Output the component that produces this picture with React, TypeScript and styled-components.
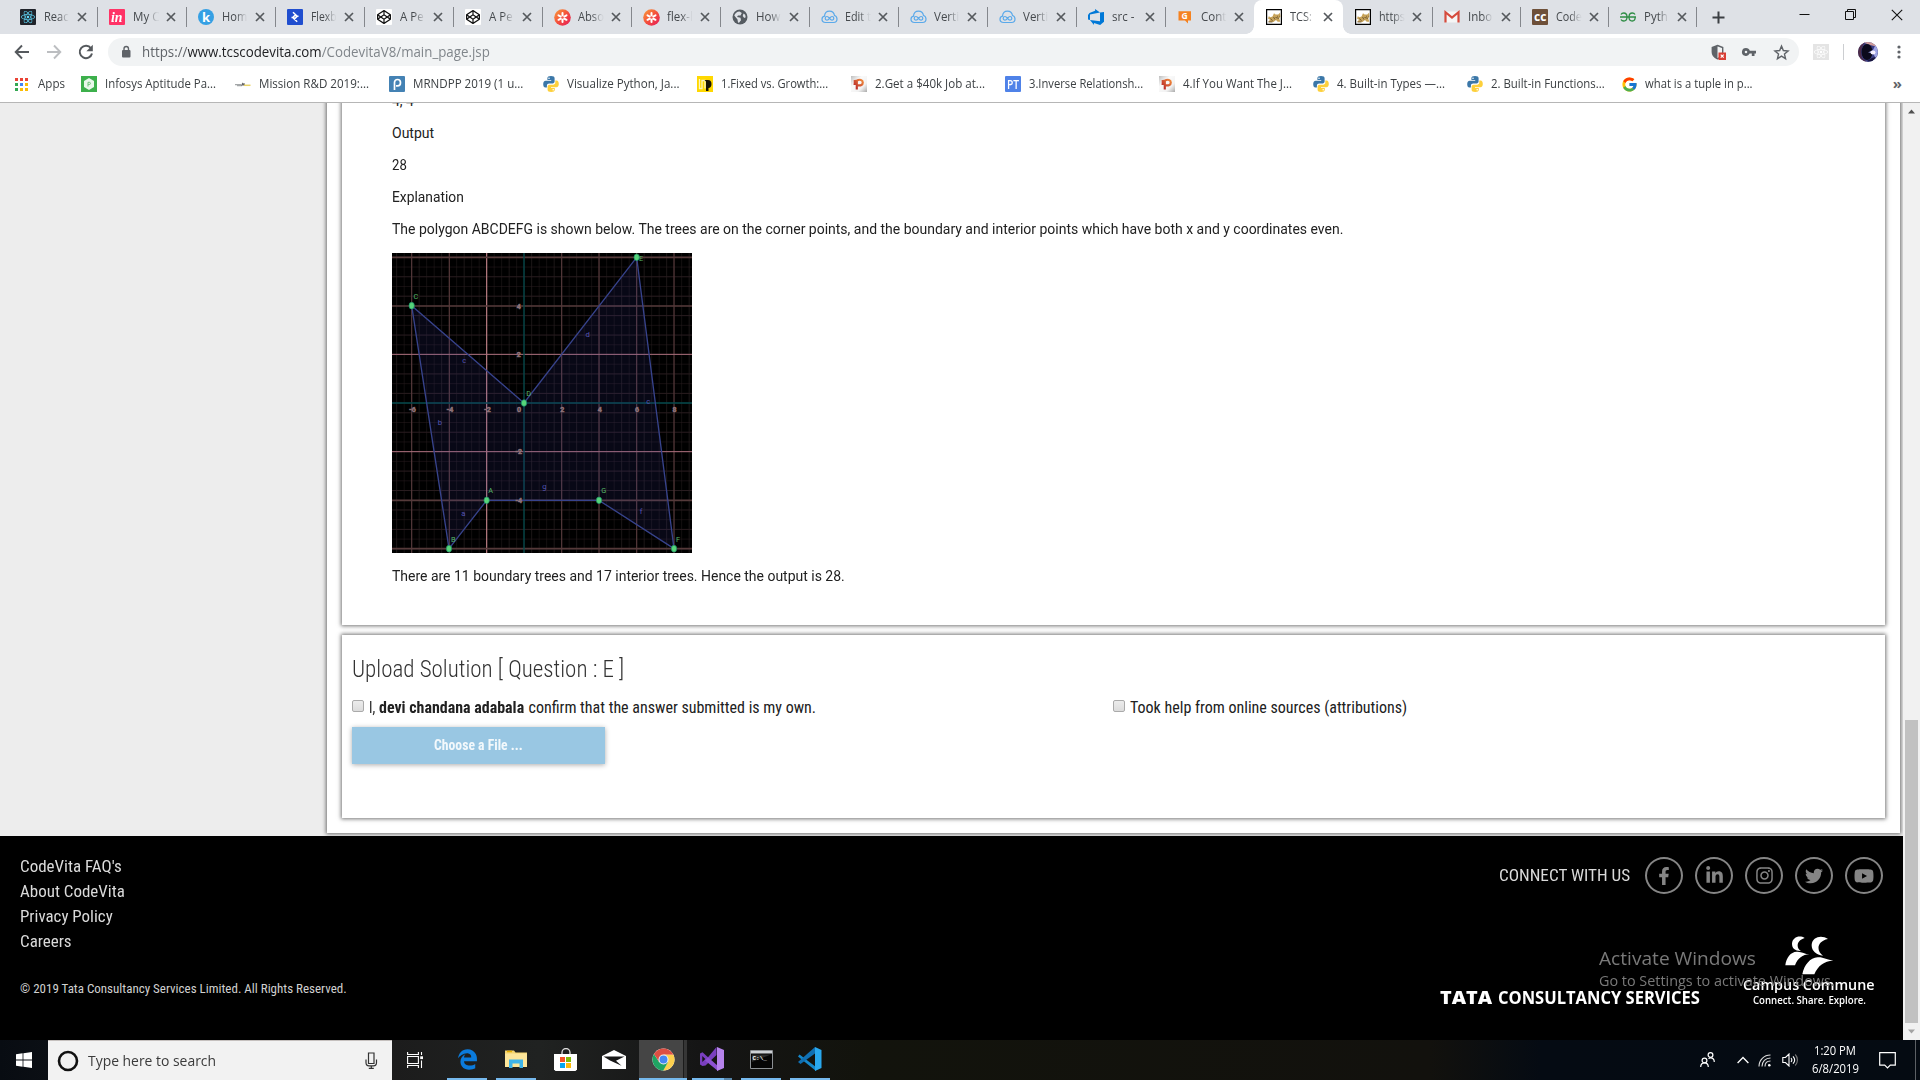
import React, { useLayoutEffect, useRef, useState } from "react";
import styled, { createGlobalStyle, css } from "styled-components";
import { FaReact, FaFacebookF, FaLinkedinIn, FaInstagram, FaTwitter, FaYoutube, FaCodepen } from "react-icons/fa";
import { FaEdgeLegacy } from "react-icons/fa6";
import { FcGoogle } from "react-icons/fc";

const UI = `"Open Sans", "Noto Sans", sans-serif`;
const BODY = `Roboto, "Liberation Sans", sans-serif`;
const COND = `"Roboto Condensed", Roboto, "Liberation Sans", sans-serif`;

const Global = createGlobalStyle`
  * { box-sizing: border-box; }
  body { margin: 0; background: #000; overflow: hidden; }
  svg { display: block; flex: none; }
  p, h2 { margin: 0; font-weight: inherit; }
`;

/* ---------- text set to a given measure ---------- */
const FitBox = styled.span<{ $w: number }>`
  display: inline-block;
  flex: none;
  width: ${(p) => p.$w}px;
  white-space: nowrap;
`;
const FitInner = styled.span`
  display: inline-block;
  transform-origin: 0 50%;
  white-space: pre;
`;
function Fit({ w, children }: { w: number; children: React.ReactNode }) {
  const ref = useRef<HTMLSpanElement>(null);
  const [scale, setScale] = useState(1);
  useLayoutEffect(() => {
    if (ref.current) setScale(w / ref.current.offsetWidth);
  }, [w]);
  return (
    <FitBox $w={w}>
      <FitInner ref={ref} style={{ transform: `scaleX(${scale})` }}>{children}</FitInner>
    </FitBox>
  );
}

/* ---------- favicons ---------- */
const Tile = styled.span<{ $bg: string; $fg?: string; $round?: boolean; $font?: string }>`
  width: 16px;
  height: 16px;
  flex: none;
  display: flex;
  align-items: center;
  justify-content: center;
  background: ${(p) => p.$bg};
  color: ${(p) => p.$fg || "#fff"};
  border-radius: ${(p) => (p.$round ? "50%" : "1px")};
  font: ${(p) => p.$font || `bold 12px/16px ${UI}`};
`;

function PythonMark() {
  return (
    <svg width="16" height="16" viewBox="0 0 16 16">
      <path d="M8 0C5.5 0 4.4.8 4.4 2.2V4H8.200v.7H2.700C1 4.700.2 6.200.2 8.200s.8 3.300 2.200 3.300h1.500V9.700c0-1.400 1-2.300 2.300-2.300h3.500c1 0 1.900-.8 1.900-1.900V2.200C11.600.8 10.500 0 8 0z" fill="#3b77a8" />
      <path d="M8.200 16c2.400 0 3.600-.8 3.600-2.200V12H8v-.7h5.500c1.500 0 2.300-1.500 2.300-3.300 0-2-.8-3.400-2.200-3.400h-1.300v1.900c0 1.300-1 2.200-2.200 2.200H6.600c-1.100 0-2 .8-2 1.900v3.200c0 1.400 1.200 2.200 3.600 2.200z" fill="#fdd03b" />
      <circle cx="6" cy="2.200" r=".8" fill="#fff" /><circle cx="10.200" cy="13.800" r=".8" fill="#fff" />
    </svg>
  );
}

function Favicon({ kind }: { kind: string }) {
  switch (kind) {
    case "react":
      return <Tile $bg="#20232a" $fg="#61dafb"><FaReact size={14} /></Tile>;
    case "invision":
      return <Tile $bg="#ff3366" $font={`italic bold 15px/14px "Liberation Serif", serif`}><Fit w={12}>in</Fit></Tile>;
    case "k":
      return <Tile $bg="#35a0e4" $round $font={`bold 13px/15px ${UI}`}>k</Tile>;
    case "flexbox":
      return (
        <Tile $bg="#204ecf">
          <svg width="16" height="16" viewBox="0 0 16 16" fill="none" stroke="#fff" strokeWidth="1.500"><path d="M6 3.200L10.200 7.300 6.800 10.600M10.200 12.700L5.800 8.500 8.800 5.500M4.500 8.600h3M8.500 7.300h3" /></svg>
        </Tile>
      );
    case "codepen":
      return <Tile $bg="#fff" $fg="#111"><FaCodepen size={14} /></Tile>;
    case "asterisk":
      return (
        <svg width="17" height="17" viewBox="0 0 17 17">
          <defs><linearGradient id="ast" x1="0" y1="0" x2="1" y2="1"><stop offset="0" stopColor="#f9a03a" /><stop offset=".5" stopColor="#f4503c" /><stop offset="1" stopColor="#e5195c" /></linearGradient></defs>
          <circle cx="8.500" cy="8.500" r="8.300" fill="url(#ast)" />
          <g stroke="#fff" strokeWidth="2" strokeLinecap="round"><path d="M8.500 4v9M4.500 6.300l8 4.500M12.500 6.300l-8 4.500" /></g>
          <circle cx="8.500" cy="8.500" r="1.300" fill="#f1574a" />
        </svg>
      );
    case "globe":
      return (
        <svg width="16" height="16" viewBox="0 0 16 16"><circle cx="8" cy="8" r="7.500" fill="#555b61" /><path d="M2.300 6.500C3 4.200 5 2.600 7.500 2.500L9.800 4 8.500 6.500H6L5 8l3.500.8.500 2.500-2 2.500-1-.3L5.500 10.500zM11.500 4.500l1.700 1.200.5 2.500-1.500.8-1.500-2z" fill="#dee1e6" /></svg>
      );
    case "cloud":
      return (
        <svg width="17" height="16" viewBox="0 0 17 16" fill="none" stroke="#5aa9ea" strokeWidth="1.200"><path d="M4.500 13.500C2.500 13.500 1 12.200 1 10.300c0-1.600 1-2.800 2.500-3.100C3.700 4.200 5.800 2.200 8.500 2.200s4.600 1.800 5 4.300c1.500.5 2.500 1.800 2.500 3.500 0 2-1.500 3.500-3.500 3.500z" /><path d="M8.500 9.300C7.500 8 6.800 7.500 6 7.500a1.800 1.800 0 000 3.600c.8 0 1.500-.5 2.500-1.800s1.700-1.800 2.500-1.800a1.800 1.800 0 010 3.600c-.8 0-1.500-.5-2.500-1.800z" /></svg>
      );
    case "devops":
      return <svg width="16" height="16" viewBox="0 0 24 24"><path fill="#0078d7" d="M0 8.877L2.247 5.910l8.405-3.416V.022l7.370 5.393L2.966 8.338v8.225L0 15.707zm24-4.450v14.651l-5.753 4.900-9.303-3.057v3.056l-5.978-7.416 15.057 1.798V5.415z" /></svg>;
    case "cont":
      return <svg width="16" height="16" viewBox="0 0 16 16"><path d="M1.500 2.200h12.500v9.300h-3v3l-3-3H1.500z" fill="#f58220" /><text x="7.700" y="9.900" textAnchor="middle" fontSize="8.500" fontWeight="700" fill="#fff" fontFamily="Open Sans, sans-serif">G</text></svg>;
    case "tomcat":
      return (
        <svg width="16" height="16" viewBox="0 0 16 16"><path d="M.6.6h14.800v14.800H.6z" fill="#fff" stroke="#000" strokeWidth="1.200" /><path d="M6.500 7.500L8 4.300l1.600 1.300h2.600L14 3.800l.5 3.700-1.200 2 1 3.300h-2.600L10 11l-2.500 2H2.200L4 10.800 2 9.500l.8-2.300 1.700 1z" fill="#c7a35a" /><path d="M4.500 9.500l2 2.300M7.500 8l1.500 2.500M2.500 13h4M11 7.300h.8M13 7.300h.6M9.500 8.500l3.500.8" stroke="#5f4a2a" strokeWidth=".8" /></svg>
      );
    case "gmail":
      return <svg width="16" height="16" viewBox="0 0 16 16"><path d="M1 2.500h14v11H1z" fill="#f5f5f5" /><path d="M1.500 13.500V3.200L8 8.500l6.500-5.300v10.300" fill="none" stroke="#d54b3d" strokeWidth="2.200" /></svg>;
    case "cc":
      return <Tile $bg="#6e5039" $font={`bold 12px/14px ${UI}`}><Fit w={12}>cc</Fit></Tile>;
    case "gfg":
      return <svg width="16" height="16" viewBox="0 0 16 16" fill="none" stroke="#2f8d46" strokeWidth="1.300"><path d="M0 8h16M7 8c0 2.700-1.400 4-3.200 4C2.500 12 1.500 11.400 1 10.500M1 5.500C1.500 4.600 2.500 4 3.700 4 5.500 4 7 5.300 7 8M9 8c0 2.700 1.400 4 3.200 4 1.600 0 3-.9 3-4M15 5.500C14.500 4.600 13.500 4 12.300 4 10.500 4 9 5.300 9 8" /></svg>;
    case "apps":
      return (
        <svg width="13" height="13" viewBox="0 0 13 13">
          {["#ea4335", "#ea4335", "#ea4335", "#34a853", "#4285f4", "#fbbc04", "#34a853", "#fbbc04", "#fbbc04"].map((c, i) => (
            <rect key={i} x={(i % 3) * 5} y={Math.floor(i / 3) * 5} width="3" height="3" fill={c} />
          ))}
        </svg>
      );
    case "infosys":
      return <svg width="16" height="16" viewBox="0 0 16 16"><path d="M0 0h16v16H0z" fill="#3db04c" /><path d="M8 2l5 2.900v6.200L8 14l-5-2.900V4.900z" fill="#e8f8ea" /><path d="M7 10.500V6.300h1.300a1.100 1.100 0 010 2.200H7.200" fill="none" stroke="#6cc277" strokeWidth="1" /></svg>;
    case "mission":
      return <svg width="16" height="16" viewBox="0 0 16 16"><path d="M0 8.700h6M2 9.700h5" stroke="#a4a7a9" strokeWidth="1.300" /><path d="M6 9.500l1.500-3 1 1 1-.5.5 2.500z" fill="#666" /><path d="M9 9.300h6.500" stroke="#e9d367" strokeWidth="1.500" /></svg>;
    case "p-blue":
      return <Tile $bg="#4482b4"><svg width="16" height="16" viewBox="0 0 16 16"><path d="M5.500 14V6.500c0-2 1.200-3 3-3s3 1.300 3 3.200-1.200 3.200-3 3.200H7" fill="none" stroke="#fff" strokeWidth="1.700" /></svg></Tile>;
    case "python":
      return <PythonMark />;
    case "lp":
      return <svg width="16" height="16" viewBox="0 0 16 16"><path d="M0 0h16v16H0z" fill="#ffd800" /><path d="M2.500 3v9.500h2.500V4.500h3v8" fill="none" stroke="#fff6c0" strokeWidth="1.300" /><path d="M7.500 4h3.500c2.300 0 3.500 1.400 3.500 4s-1.300 4-3 4v3H9V5.500z" fill="#1a1505" /></svg>;
    case "p-red":
      return (
        <svg width="16" height="16" viewBox="0 0 16 16"><defs><linearGradient id="pr" x1="0" y1="0" x2="1" y2="1"><stop offset="0" stopColor="#bdbdbd" /><stop offset=".35" stopColor="#fafafa" /><stop offset=".7" stopColor="#f2f2f2" /><stop offset="1" stopColor="#aaa" /></linearGradient><linearGradient id="pg" x1="1" y1="0" x2="0" y2="1"><stop offset="0" stopColor="#f08a3c" /><stop offset="1" stopColor="#b3202a" /></linearGradient></defs><path d="M0 0h16v16H0z" fill="url(#pr)" /><path d="M5.800 13.500V4.700c3-1.900 6-.7 6 1.700 0 2.200-2.200 3.600-5.200 2.800M3.600 4c.5 1.500.2 3 0 5" fill="none" stroke="url(#pg)" strokeWidth="2.200" /></svg>
      );
    case "pt":
      return <Tile $bg="#4f82e8" $font={`600 12px/15px ${UI}`}><Fit w={12}>PT</Fit></Tile>;
    default:
      return <FcGoogle size={17} />;
  }
}

/* ---------- tab strip ---------- */
const Desktop = styled.div`
  width: 1920px;
  height: 1080px;
  display: flex;
  flex-direction: column;
  overflow: hidden;
  position: relative;
`;
const TabStrip = styled.div`
  height: 34px;
  flex: none;
  display: flex;
  padding-left: 8px;
  background: #dee1e6;
`;
const TabItem = styled.div<{ $active?: boolean; $w: number; $line?: boolean }>`
  width: ${(p) => p.$w}px;
  height: 34px;
  flex: none;
  display: flex;
  align-items: center;
  padding: 0 9px 0 12px;
  position: relative;
  font: 12px/18px ${UI};
  color: #45494d;
  ${(p) => p.$line && css`
    &::after { content: ""; position: absolute; right: -1px; top: 7px; width: 1px; height: 20px; background: #84878c; }
  `}
  ${(p) => p.$active && css`
    background: #fff;
    border-radius: 8px 8px 0 0;
    &::before, &::after { content: ""; position: absolute; bottom: 0; width: 8px; height: 8px; }
    &::before { left: -8px; background: radial-gradient(circle at 0 0, transparent 7.500px, #fff 8px); }
    &::after { right: -8px; background: radial-gradient(circle at 100% 0, transparent 7.500px, #fff 8px); }
  `}
`;
const TabIcon = styled.span`
  width: 16px;
  flex: none;
  display: flex;
  justify-content: center;
`;
const TabLabel = styled.span<{ $solid?: boolean }>`
  width: 26px;
  margin-left: 8px;
  flex: none;
  height: 18px;
  ${(p) => !p.$solid && css`mask-image: linear-gradient(to right, #000 54%, rgba(0, 0, 0, 0.08) 92%);`}
`;
const TabClose = styled.span`
  margin-left: 7px;
  display: flex;
`;
const WindowButtons = styled.div`
  margin-left: auto;
  display: flex;
  align-items: center;
  height: 29px;
  gap: 35px;
  padding-right: 17px;
`;
const NewTab = styled.span`
  display: flex;
  align-items: center;
  padding-left: 16px;
`;

const tabs: { icon: string; label: string; w?: number; active?: boolean; tw?: number; solid?: boolean }[] = [
  { icon: "react", label: "Reac", tw: 25 },
  { icon: "invision", label: "My C", tw: 26 },
  { icon: "k", label: "Hom", tw: 25 },
  { icon: "flexbox", label: "Flexb", tw: 26 },
  { icon: "codepen", label: "A Pe", tw: 24 },
  { icon: "codepen", label: "A Pe", tw: 24 },
  { icon: "asterisk", label: "Abso", tw: 26 },
  { icon: "asterisk", label: "flex-l", tw: 26 },
  { icon: "globe", label: "How", tw: 24 },
  { icon: "cloud", label: "Edit t", tw: 26 },
  { icon: "cloud", label: "Verti", tw: 25 },
  { icon: "cloud", label: "Verti", tw: 25 },
  { icon: "devops", label: "src -", tw: 22, solid: true },
  { icon: "cont", label: "Cont", tw: 25 },
  { icon: "tomcat", label: "TCS:", tw: 22, active: true },
  { icon: "tomcat", label: "https", tw: 26 },
  { icon: "gmail", label: "Inbo", tw: 24, w: 88 },
  { icon: "cc", label: "Code", tw: 26, w: 88 },
  { icon: "gfg", label: "Pyth", tw: 24, w: 88 },
];

/* ---------- toolbar ---------- */
const Toolbar = styled.div`
  height: 36px;
  flex: none;
  display: flex;
  align-items: center;
  background: #fff;
  padding: 0 14px;
`;
const NavButtons = styled.div`
  display: flex;
  gap: 16px;
  width: 94px;
  flex: none;
`;
const Omnibox = styled.div`
  width: 1691px;
  height: 28px;
  flex: none;
  border-radius: 14px;
  background: #f1f3f4;
  display: flex;
  align-items: center;
  padding: 0 9px 0 12px;
  font: 14px/20px ${UI};
  color: #80868b;
  b { font-weight: 400; color: #202124; }
  i { font-style: normal; color: #5f6368; }
`;
const UrlText = styled.div`
  flex: 1;
  margin-left: 10px;
  height: 21px;
`;
const OmniIcons = styled.div`
  display: flex;
  gap: 14px;
  align-items: center;
  svg:last-child { margin-left: 2px; }
`;
const ToolbarRight = styled.div`
  display: flex;
  align-items: center;
  flex: 1;
  justify-content: space-between;
  padding-left: 14px;
`;
const ExtTile = styled.span`
  width: 16px;
  height: 16px;
  background: #e4e4e4;
  color: #fff;
  display: flex;
  align-items: center;
  justify-content: center;
`;
const ToolDivider = styled.span`
  width: 1px;
  height: 16px;
  background: #ccced1;
`;

/* ---------- bookmarks ---------- */
const BookmarkBar = styled.div`
  height: 33px;
  flex: none;
  display: flex;
  align-items: center;
  background: #fff;
  border-bottom: 1px solid #b6b6b6;
  padding: 0 18px 4px 15px;
  font: 12px/18px ${UI};
  color: #3c4043;
`;
const Bookmark = styled.div<{ $w: number; $gap?: number }>`
  width: ${(p) => p.$w}px;
  flex: none;
  display: flex;
  align-items: center;
  gap: ${(p) => p.$gap ?? 8}px;
`;
const More = styled.span`
  margin-left: auto;
  padding-bottom: 2px;
  font: bold 15px/16px ${UI};
  color: #5f6368;
`;
const bookmarks: [string, string, number][] = [
  ["infosys", "Infosys Aptitude Pa...", 111],
  ["mission", "Mission R&D 2019:...", 110],
  ["p-blue", "MRNDPP 2019 (1 u...", 110],
  ["python", "Visualize Python, Ja...", 112],
  ["lp", "1.Fixed vs. Growth:...", 107],
  ["p-red", "2.Get a $40k Job at...", 110],
  ["pt", "3.Inverse Relationsh...", 114],
  ["p-red", "4.If You Want The J...", 109],
  ["python", "4. Built-in Types —...", 108],
  ["python", "2. Built-in Functions...", 114],
  ["google", "what is a tuple in p...", 108],
];

/* ---------- page ---------- */
const Viewport = styled.div`
  height: 937px;
  flex: none;
  display: flex;
  background: #ededed;
`;
const PageArea = styled.div`
  width: 1903px;
  height: 937px;
  overflow: hidden;
  display: flex;
  flex-direction: column;
`;
const Upper = styled.div`
  height: 733px;
  flex: none;
  overflow: hidden;
  display: flex;
  padding: 0 3px 3px 327px;
`;
const raised = css`
  background: #fff;
  box-shadow: 0 0 4px 1px rgba(0, 0, 0, 0.55);
`;
const Panel = styled.main`
  ${raised}
  flex: 1;
  height: 750px;
  margin-top: -20px;
  padding: 0 15px 15px 15px;
  display: flex;
  flex-direction: column;
  justify-content: flex-end;
  gap: 10px;
`;
const Card = styled.section<{ $h: number }>`
  ${raised}
  height: ${(p) => p.$h}px;
  flex: none;
`;
const Problem = styled.div`
  padding: 8px 0 0 50px;
  font: 14px/20px ${BODY};
  color: #212121;
  display: flex;
  flex-direction: column;
  gap: 12px;
`;
const Figure = styled.div`
  margin: 2px 0 1px;
  height: 300px;
`;
const UploadBody = styled.div`
  padding: 18px 10px;
  display: flex;
  flex-direction: column;
  font: 16px/22px ${COND};
  color: #212121;
`;
const Title = styled.h2`
  font: 300 24px/32px ${COND};
  color: #333;
  height: 32px;
`;
const ConfirmRow = styled.div`
  display: flex;
  margin-top: 12px;
  height: 22px;
`;
const Confirm = styled.label<{ $w: number }>`
  width: ${(p) => p.$w}px;
  flex: none;
  display: flex;
  b { font-weight: 700; }
`;
const Check = styled.span`
  width: 12px;
  height: 12px;
  margin: 3px 5px 0 0;
  flex: none;
  border: 1px solid #aaa;
  border-radius: 2px;
  background: linear-gradient(#ececec, #dcdcdc);
`;
const Words = styled.span`
  display: flex;
  gap: 4px;
`;
const FileButton = styled.button`
  width: 253px;
  height: 37px;
  margin: 8px 0 0;
  border: 0;
  padding: 0 0 2px;
  background: #99c7e3;
  color: #f3f9fc;
  font: 700 14px/20px ${COND};
  box-shadow: 0 1px 5px rgba(0, 0, 0, 0.33);
`;

const Scrollbar = styled.div`
  width: 17px;
  height: 937px;
  background: #f1f1f1;
  display: flex;
  flex-direction: column;
  align-items: center;
  padding: 6px 0;
`;
const Thumb = styled.div`
  width: 13px;
  height: 303px;
  margin-top: auto;
  margin-bottom: 6px;
  background: #c1c1c1;
`;

/* ---------- footer ---------- */
const Footer = styled.footer`
  height: 204px;
  flex: none;
  background: #000;
  display: flex;
  justify-content: space-between;
  padding: 17px 19px 0 20px;
  font: 16px/25px ${COND};
  color: #dadada;
`;
const FooterLinks = styled.nav`
  display: flex;
  flex-direction: column;
  padding-top: 1px;
  small { font: 13px/20px ${COND}; color: #d0d0d0; margin-top: 25px; }
`;
const FooterRight = styled.div`
  display: flex;
  flex-direction: column;
  align-items: flex-end;
  padding-top: 4px;
`;
const Social = styled.div`
  display: flex;
  align-items: center;
  gap: 12px;
  margin-right: 1px;
`;
const SocialLabel = styled.span`
  margin-right: 3px;
`;
const Ring = styled.span`
  width: 38px;
  height: 37px;
  border: 2px solid #858585;
  border-radius: 50%;
  color: #858585;
  display: flex;
  align-items: center;
  justify-content: center;
`;
const Brands = styled.div`
  display: flex;
  align-items: flex-end;
  margin-top: 41px;
  padding-right: 9px;
  color: #fff;
`;
const TcsBrand = styled.div`
  display: flex;
  gap: 6px;
  font: 700 17.500px/18px ${UI};
  margin-right: 43px;
  b { font-weight: 800; }
`;
const Commune = styled.div`
  display: flex;
  flex-direction: column;
  align-items: center;
  font: 600 15px/18px ${UI};
  small { font: 600 11px/13px ${UI}; }
`;
const Watermark = styled.div`
  position: absolute;
  left: 1599px;
  top: 945px;
  display: flex;
  flex-direction: column;
  color: rgba(128, 128, 128, 0.95);
  font: 14.500px/20px ${UI};
  strong { font: 19px/26px ${UI}; }
`;

/* ---------- taskbar ---------- */
const Taskbar = styled.div`
  height: 40px;
  flex: none;
  display: flex;
  background: linear-gradient(to right, #080c12 0, #0b0f14 48px, #1c1c1c 392px, #202221 540px, #151515 700px, #12130c 870px, #12110d 1430px, #050b13 1540px, #050b12 100%);
`;
const StartButton = styled.div`
  width: 48px;
  display: flex;
  align-items: center;
  justify-content: center;
`;
const SearchBox = styled.div`
  width: 344px;
  flex: none;
  background: #f2f2f2;
  border-top: 1px solid #c5c0be;
  display: flex;
  align-items: center;
  padding: 0 14px 0 9px;
  font: 15px/20px ${UI};
  color: #3b3b3b;
`;
const SearchText = styled.span`
  flex: 1;
  margin-left: 9px;
  padding-bottom: 2px;
`;
const TaskView = styled.div`
  width: 50.500px;
  display: flex;
  align-items: center;
  justify-content: center;
  padding-right: 3px;
`;
const AppButton = styled.div<{ $line?: boolean; $active?: boolean; $more?: boolean }>`
  width: ${(p) => (p.$active ? 48 : 40)}px;
  margin: ${(p) => (p.$active ? "0 0.500px" : "0 4.500px")};
  flex: none;
  display: flex;
  align-items: center;
  justify-content: center;
  border-bottom: 2px solid ${(p) => (p.$line ? "#76b9ed" : "transparent")};
  ${(p) => p.$active && css`
    background: linear-gradient(to right, #454545 44px, #1b1b1b 44px, #1b1b1b 45px, #363636 45px);
  `}
  ${(p) => p.$more && css`
    border-image: linear-gradient(to right, #76b9ed 78%, #5686ab 78%) 2;
    border-width: 0 0 2px;
  `}
`;
const Tray = styled.div`
  margin-left: auto;
  display: flex;
  align-items: center;
  color: #fff;
  font: 12px/18px ${UI};
`;
const TrayIcon = styled.span<{ $w: number }>`
  width: ${(p) => p.$w}px;
  display: flex;
  justify-content: center;
`;
const Clock = styled.div`
  width: 58px;
  display: flex;
  flex-direction: column;
  align-items: center;
`;
const ShowDesktop = styled.span`
  width: 5px;
  height: 40px;
  border-left: 1px solid #5c6064;
`;

/* ---------- figure ---------- */
const range = (n: number) => Array.from({ length: n }, (_, i) => i);
function Graph() {
  const vx = [95, 208, 320, 545, 657, 770, 882];
  const hy = [37, 183, 328, 620, 766, 911];
  const pts: [string, number, number, number, number][] = [
    ["A", 320, 766, 332, 745], ["B", 207, 911, 220, 891], ["C", 95, 182, 108, 162], ["D", 432, 474, 446, 454],
    ["E", 770, 37, 783, 47], ["F", 882, 911, 894, 890], ["G", 657, 766, 671, 745],
  ];
  const edges: [string, number, number][] = [["a", 250, 813], ["b", 180, 539], ["c", 253, 353], ["d", 623, 276], ["c", 805, 478], ["f", 783, 806], ["g", 493, 732]];
  return (
    <svg width="300" height="300" viewBox="36 24 900 900" fontFamily="Roboto, sans-serif">
      <path d="M36 24h900v900H36z" fill="#000" />
      {range(40).map((i) => <path key={`v${i}`} d={`M${50 + i * 22.5} 24v900`} stroke="#1c1717" strokeWidth="3" opacity={i % 3 ? 0.7 : 1} />)}
      {range(31).map((i) => <path key={`h${i}`} d={`M36 ${37 + i * 29.15}h900`} stroke="#2a1d20" strokeWidth="3" opacity={i % 2 ? 0.5 : 1} />)}
      {vx.map((x) => <path key={x} d={`M${x} 24v900`} stroke={x === 320 ? "#bd8085" : "#56393b"} strokeWidth="3.500" />)}
      {hy.map((y) => <path key={y} d={`M36 ${y}h900`} stroke={y === 328 || y === 620 ? "#ab6f7c" : "#553a3a"} strokeWidth={y === 328 || y === 620 ? 3 : 5} />)}
      <path d="M432 24v900M36 474h900" stroke="#034a4c" strokeWidth="4" />
      <path d="M320 766L207 911 95 182l337 292L770 37l112 874-225-145z" fill="#4040b8" fillOpacity=".12" stroke="#37438c" strokeWidth="4" />
      <g fontSize="21" fontWeight="700" fill="#c08c94" stroke="#7d6a70" strokeWidth="1.500" textAnchor="middle">
        {[-6, -4, -2, 0, 2, 4, 6, 8].map((n, i) => (
          <text key={n} x={n === 0 ? 417 : 97 + i * 112.400} y="502">{n}</text>
        ))}
        {[[4, 191], [2, 337], [-2, 627], [-4, 773]].map(([n, y]) => (
          <text key={n} x="416" y={y}>{n}</text>
        ))}
      </g>
      {edges.map(([t, x, y], i) => <text key={i} x={x} y={y} textAnchor="middle" fontSize="23" fill="#5454b4">{t}</text>)}
      {pts.map(([t, x, y, tx, ty]) => (
        <g key={t}>
          <ellipse cx={x} cy={y} rx="8" ry="10" fill="#57d57a" stroke="#178c66" strokeWidth="2" />
          <text x={tx} y={ty} textAnchor="middle" fontSize="22" fill="#55b768">{t}</text>
        </g>
      ))}
    </svg>
  );
}

function ChromeLogo() {
  return (
    <svg width="23" height="23" viewBox="0 0 48 48">
      <circle cx="24" cy="24" r="23" fill="#fff" />
      <path d="M24 24L4.100 12.500A23 23 0 0143.900 12.500L45 14H24z" fill="#dd4f43" />
      <path d="M24 14h20.700A23 23 0 0123 47l10-18z" fill="#fdd04e" />
      <path d="M4.100 12.500A23 23 0 0023.500 47L33.500 29 24 24 15 29z" fill="#1fa463" />
      <path d="M4.100 12.500L15 29l9-15z" fill="#dd4f43" />
      <circle cx="24" cy="24" r="10.500" fill="#f1f1f1" /><circle cx="24" cy="24" r="8.300" fill="#4587f3" />
    </svg>
  );
}

function Avatar() {
  return (
    <svg width="20" height="20" viewBox="0 0 20 20">
      <defs><clipPath id="av"><circle cx="10" cy="10" r="10" /></clipPath></defs>
      <g clipPath="url(#av)">
        <path d="M0 0h20v20H0z" fill="#3b3f86" />
        <path d="M4 0h16v5L12 3z" fill="#cf9a98" />
        <path d="M0 0h7L4 5 3 10l1 6 5 4H0z" fill="#4e2c48" />
        <ellipse cx="9" cy="10" rx="5.500" ry="8" fill="#0b0a1c" />
        <path d="M18 2l-3 6-5 2.500 5 .5 3 6 2-7z" fill="#9ea4e6" />
        <ellipse cx="15" cy="10.500" rx="2.500" ry="2" fill="#f5f0ff" />
        <path d="M9 19l5-3 4-1-4 5z" fill="#18153c" />
      </g>
    </svg>
  );
}

export default function App() {
  return (
    <Desktop>
      <Global />
      <TabStrip>
        {tabs.map((t, i) => (
          <TabItem key={i} $w={t.w ?? 89} $active={t.active} $line={!t.active && i !== 13}>
            <TabIcon><Favicon kind={t.icon} /></TabIcon>
            <TabLabel $solid={t.solid}><Fit w={t.tw ?? 25}>{t.label}</Fit></TabLabel>
            <TabClose><svg width="10" height="10" viewBox="0 0 10 10"><path d="M1 1l8 8M9 1L1 9" stroke="#55595d" strokeWidth="1.700" /></svg></TabClose>
          </TabItem>
        ))}
        <NewTab><svg width="13" height="13" viewBox="0 0 13 13"><path d="M6.500 .5v12M.5 6.500h12" stroke="#3b3f43" strokeWidth="2" /></svg></NewTab>
        <WindowButtons>
          <svg width="11" height="11" viewBox="0 0 11 11"><path d="M.5 5.500h10" stroke="#111" /></svg>
          <svg width="11" height="11" viewBox="0 0 11 11" fill="none" stroke="#111"><path d="M.5 2.500h8v8h-8zM2.500 2.500v-2h8v8h-2" /></svg>
          <svg width="12" height="12" viewBox="0 0 12 12"><path d="M.8.8l10.400 10.400M11.200.8L.8 11.200" stroke="#111" strokeWidth="1.100" /></svg>
        </WindowButtons>
      </TabStrip>

      <Toolbar>
        <NavButtons>
          <svg width="16" height="16" viewBox="0 0 16 16" fill="none" stroke="#55595d" strokeWidth="1.900"><path d="M15 8H2M8 1.500L1.700 8 8 14.500" /></svg>
          <svg width="16" height="16" viewBox="0 0 16 16" fill="none" stroke="#bcbec1" strokeWidth="1.900"><path d="M1 8h13M8 1.500L14.300 8 8 14.500" /></svg>
          <svg width="16" height="16" viewBox="0 0 16 16"><path d="M13 4.300A6.200 6.200 0 1014 9.500" fill="none" stroke="#55595d" strokeWidth="2" /><path d="M14.800.8v6.400H8.400z" fill="#55595d" /></svg>
        </NavButtons>
        <Omnibox>
          <svg width="12" height="14" viewBox="0 0 12 14"><rect x="2" y="5" width="8.500" height="7.500" rx="1" fill="#5f6368" /><path d="M4 5.500V3.800a2.200 2.200 0 014.500 0v1.700" fill="none" stroke="#5f6368" strokeWidth="1.400" /></svg>
          <UrlText><Fit w={348}><i>https://</i><b>www.tcscodevita.com</b>/CodevitaV8/main_page.jsp</Fit></UrlText>
          <OmniIcons>
            <svg width="17" height="17" viewBox="0 0 17 17"><path d="M7.500 1.500L2.300 3.500V8c0 3.500 2.300 5.600 5.200 6.800" fill="#5f6368" /><path d="M7.500 1.500l5.200 2V8c0 3.500-2.300 5.600-5.200 6.800-2.900-1.200-5.200-3.300-5.200-6.800V3.500z" fill="none" stroke="#5f6368" strokeWidth="1.400" /><path d="M8.500 8.500H16V16H8.500z" fill="#d93f35" /><path d="M10.700 10.700l3 3M13.700 10.700l-3 3" stroke="#fff" strokeWidth="1.200" /></svg>
            <svg width="16" height="12" viewBox="0 0 16 12"><path fillRule="evenodd" d="M5 2a4 4 0 013.800 2.800H15v2.800h-1.500V10h-2.700V7.600H8.600A4 4 0 115 2zm0 2.700a1.300 1.300 0 100 2.600 1.300 1.300 0 000-2.600z" fill="#5f6368" /></svg>
            <svg width="17" height="17" viewBox="0 0 24 24"><path d="M12 3l2.600 6.200 6.700.6-5.100 4.400 1.500 6.500L12 17.200l-5.700 3.500 1.500-6.500-5.100-4.400 6.700-.6z" fill="none" stroke="#5f6368" strokeWidth="2" /></svg>
          </OmniIcons>
        </Omnibox>
        <ToolbarRight>
          <ExtTile><FaReact size={14} /></ExtTile>
          <ToolDivider />
          <Avatar />
          <svg width="14" height="14" viewBox="0 0 14 14" fill="#5f6368"><circle cx="7" cy="2" r="1.600" /><circle cx="7" cy="7" r="1.600" /><circle cx="7" cy="12" r="1.600" /></svg>
        </ToolbarRight>
      </Toolbar>

      <BookmarkBar>
        <Bookmark $w={66} $gap={10}><Favicon kind="apps" /><Fit w={27}>Apps</Fit></Bookmark>
        {bookmarks.map(([icon, label, w]) => (
          <Bookmark key={label} $w={154} $gap={icon === "google" ? 7 : 8}><Favicon kind={icon} /><Fit w={w}>{label}</Fit></Bookmark>
        ))}
        <More>»</More>
      </BookmarkBar>

      <Viewport>
        <PageArea>
          <Upper>
            <Panel>
              <Card $h={542}>
                <Problem>
                  <p>4, 4</p>
                  <p><Fit w={42}>Output</Fit></p>
                  <p><Fit w={15}>28</Fit></p>
                  <p><Fit w={72}>Explanation</Fit></p>
                  <p><Fit w={951}>The polygon ABCDEFG is shown below. The trees are on the corner points, and the boundary and interior points which have both x and y coordinates even.</Fit></p>
                  <Figure><Graph /></Figure>
                  <p><Fit w={453}>There are 11 boundary trees and 17 interior trees. Hence the output is 28.</Fit></p>
                </Problem>
              </Card>
              <Card $h={183}>
                <UploadBody>
                  <Title><Fit w={272}>Upload Solution [ Question : E ]</Fit></Title>
                  <ConfirmRow>
                    <Confirm $w={761}><Check /><Words><Fit w={6}>I,</Fit><b><Fit w={145.500}>devi chandana adabala</Fit></b><Fit w={288}>confirm that the answer submitted is my own.</Fit></Words></Confirm>
                    <Confirm $w={300}><Check /><Fit w={277}>Took help from online sources (attributions)</Fit></Confirm>
                  </ConfirmRow>
                  <FileButton><Fit w={89}>Choose a File ...</Fit></FileButton>
                </UploadBody>
              </Card>
            </Panel>
          </Upper>
          <Footer>
            <FooterLinks>
              <Fit w={102}>CodeVita FAQ's</Fit>
              <Fit w={105}>About CodeVita</Fit>
              <Fit w={93}>Privacy Policy</Fit>
              <Fit w={52}>Careers</Fit>
              <small><Fit w={327}>© 2019 Tata Consultancy Services Limited. All Rights Reserved.</Fit></small>
            </FooterLinks>
            <FooterRight>
              <Social>
                <SocialLabel><Fit w={131}>CONNECT WITH US</Fit></SocialLabel>
                <Ring><FaFacebookF size={18} /></Ring>
                <Ring><FaLinkedinIn size={19} /></Ring>
                <Ring><FaInstagram size={19} /></Ring>
                <Ring><FaTwitter size={18} /></Ring>
                <Ring><FaYoutube size={20} /></Ring>
              </Social>
              <Brands>
                <TcsBrand><b><Fit w={52}>TATA</Fit></b><Fit w={202}>CONSULTANCY SERVICES</Fit></TcsBrand>
                <Commune>
                  <svg width="50" height="40" viewBox="1088 344 150 120" fill="#fff">
                    <path d="M1150 353C1134 343 1113 351 1112 370c0 13 8 21 27 22-14-8-16-30 11-39zM1092 435c3-24 16-40 34-41 16-1 24 7 38 8-20 1-35 12-43 33z" />
                    <path d="M1220 356c-20-14-47-6-49 17-1 18 13 30 34 33-20-13-20-43 15-50zM1143 462c6-29 23-49 46-51 18-1 28 8 47 10-28 1-46 15-57 41z" />
                  </svg>
                  <Fit w={132}>Campus Commune</Fit>
                  <small><Fit w={113}>Connect. Share. Explore.</Fit></small>
                </Commune>
              </Brands>
            </FooterRight>
          </Footer>
        </PageArea>
        <Scrollbar>
          <svg width="7" height="5" viewBox="0 0 7 5"><path d="M0 4.500L3.500 .5 7 4.500z" fill="#505050" /></svg>
          <Thumb />
          <svg width="7" height="5" viewBox="0 0 7 5"><path d="M0 .5L3.500 4.500 7 .5z" fill="#a3a3a3" /></svg>
        </Scrollbar>
      </Viewport>

      <Taskbar>
        <StartButton><svg width="16" height="16" viewBox="0 0 16 16" fill="#fff"><path d="M0 2.200l6.600-.9v6.300H0zM7.400 1.200L16 0v7.600H7.400zM0 8.400h6.600v6.300L0 13.800zM7.400 8.400H16V16l-8.600-1.200z" /></svg></StartButton>
        <SearchBox>
          <svg width="22" height="22" viewBox="0 0 22 22"><circle cx="11" cy="11" r="9" fill="none" stroke="#111" strokeWidth="2.600" /></svg>
          <SearchText><Fit w={128}>Type here to search</Fit></SearchText>
          <svg width="13" height="17" viewBox="0 0 13 17" fill="none" stroke="#333" strokeWidth="1.200"><path d="M3.500 1h5.500v10.500H3.500zM1 7.500v3c0 2.200 1 3.300 3 3.300h4.500c2 0 3-1.100 3-3.300v-3M6.300 14v2.500M3.800 16.300h5" /></svg>
        </SearchBox>
        <TaskView><svg width="17" height="16" viewBox="0 0 17 16" fill="none" stroke="#fff" strokeWidth="1.100"><path d="M.6 0v2.500h10.800V0M.6 16v-2.500h10.800V16M.6 4.500h10.800v7H.6zM14.500 0v3M14.500 8.500V16" /><path d="M13.200 4.300h2.800v2.800h-2.800z" fill="#fff" stroke="none" /></svg></TaskView>
        <AppButton $line><FaEdgeLegacy size={21} color="#0b7bdc" /></AppButton>
        <AppButton $line>
          <svg width="22" height="18" viewBox="0 0 22 18"><path d="M0 .5h9l1.500 2H22V17H0z" fill="#f5d572" /><path d="M0 3.500h22V17H0z" fill="#fde69a" /><path d="M4 9.500h14V18h-3.500v-4.500h-7V18H4z" fill="#3fb4e8" /><path d="M2 1.500h5" stroke="#e8b000" strokeWidth="1.500" /></svg>
        </AppButton>
        <AppButton>
          <svg width="23" height="23" viewBox="0 0 23 23"><path d="M0 6h23v15.500l-1.500 1.500h-20L0 21.500z" fill="#fff" /><path d="M8 6V4.500a4 4 0 018 0V6" fill="none" stroke="#ddd" strokeWidth="1.300" /><path d="M6 9h5v5H6z" fill="#f35325" /><path d="M12 9h5v5h-5z" fill="#81bc06" /><path d="M6 15h5v5H6z" fill="#05a6f0" /><path d="M12 15h5v5h-5z" fill="#ffba08" /></svg>
        </AppButton>
        <AppButton>
          <svg width="24" height="19" viewBox="0 0 24 19"><path d="M0 6L12 0l12 6v13H0z" fill="#fff" /><path d="M1.500 6.500h21L14 10.800l5.500 5L8 10.500z" fill="#181818" /></svg>
        </AppButton>
        <AppButton $line $active><ChromeLogo /></AppButton>
        <AppButton $line $more>
          <svg width="24" height="24" viewBox="0 0 24 24"><path d="M0 6.500L2.500 5.300l5.500 5L16.500 0v8L5.500 18.500 2.500 19 0 17.500zM2.300 9v6l3-3z" fill="#7a3fc0" fillRule="evenodd" /><path d="M8 10.300L18 19v5L5 13.500z" fill="#8d51d3" /><path d="M17 0l7 3v18l-7 3z" fill="#b683ec" /></svg>
        </AppButton>
        <AppButton $line>
          <svg width="23" height="19" viewBox="0 0 23 19"><path d="M.5.500h22v18H.5z" fill="#050505" stroke="#8b8f93" /><path d="M1 1h21v2.500H1z" fill="#cdd1d5" /><path d="M2 4.500h19L2 12z" fill="#2b2b2b" /><text x="2.500" y="10" fontSize="6" fontWeight="700" fill="#fff" fontFamily="Liberation Mono, monospace">C:\_</text></svg>
        </AppButton>
        <AppButton $line>
          <svg width="24" height="24" viewBox="0 0 24 24"><path d="M1.500 7.500L18 20v4L0 9.500z" fill="#1488cc" /><path d="M0 15L17 0v6.500L2.500 17z" fill="#1070b3" /><path d="M17 0l6.500 3v18L17 24z" fill="#29a8ee" /></svg>
        </AppButton>
        <Tray>
          <TrayIcon $w={50}><svg width="15" height="16" viewBox="0 0 15 16" fill="none" stroke="#fff" strokeWidth="1.200"><circle cx="10.500" cy="3" r="2.400" /><circle cx="4.500" cy="8.500" r="2.400" /><path d="M.7 15c0-2.800 1.700-4.200 3.800-4.200s3.800 1.400 3.800 4.200M8.500 6.700c.6-.6 1.200-.9 2-.9 2.100 0 3.800 1.400 3.800 4.200" /></svg></TrayIcon>
          <TrayIcon $w={22}><svg width="12" height="8" viewBox="0 0 12 8"><path d="M.6 7L6 1.500 11.400 7" fill="none" stroke="#fff" strokeWidth="1.300" /></svg></TrayIcon>
          <TrayIcon $w={21}><svg width="13" height="13" viewBox="0 0 13 13" fill="none" stroke="#ddd" strokeWidth="1.100"><path d="M1 12.500C1 6 6 1 12.500 1M4 12.500C4 7.500 7.500 4 12.500 4M7 12.500C7 9 9 7 12.500 7" /><circle cx="11.300" cy="11.300" r="1.300" fill="#fff" stroke="none" /></svg></TrayIcon>
          <TrayIcon $w={31}><svg width="17" height="14" viewBox="0 0 17 14" fill="none" stroke="#fff" strokeWidth="1.100"><path d="M.8 4.500h2.700L7 1v12L3.500 9.500H.8zM9 5c1 1.200 1 2.800 0 4M11 3.300c2 2.200 2 5.200 0 7.400" /><path d="M13.200 1.500c3 3.200 3 7.800 0 11" stroke="#777" /></svg></TrayIcon>
          <Clock><Fit w={42}>1:20 PM</Fit><Fit w={47}>6/8/2019</Fit></Clock>
          <TrayIcon $w={46}><svg width="17" height="17" viewBox="0 0 17 17"><path d="M.7.7h15.600v12.500h-5L8.500 16l-2.800-2.800h-5z" fill="none" stroke="#fff" strokeWidth="1.200" /></svg></TrayIcon>
          <TrayIcon $w={5} />
          <ShowDesktop />
        </Tray>
      </Taskbar>

      <Watermark>
        <strong><Fit w={157}>Activate Windows</Fit></strong>
        <Fit w={236}>Go to Settings to activate Windows.</Fit>
      </Watermark>
    </Desktop>
  );
}
